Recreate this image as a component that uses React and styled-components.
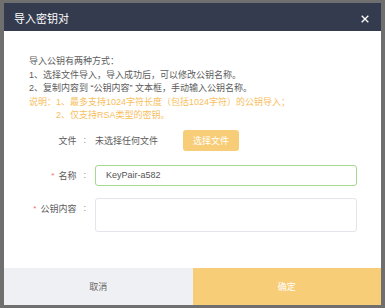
import React from 'react';
import styled, { createGlobalStyle } from 'styled-components';

const GlobalStyle = createGlobalStyle`
  html, body {
    margin: 0;
    padding: 0;
    background: #6f6f6f;
  }
  body {
    font-family: "Liberation Sans", "Noto Sans CJK SC", sans-serif;
    font-size: 9px;
    color: #666;
  }
`;

const Backdrop = styled.div`
  display: flex;
  padding: 3px 0 0 4px;
  height: 308px;
  box-sizing: border-box;
`;

const Dialog = styled.div`
  width: 377px;
  height: 302px;
  display: flex;
  flex-direction: column;
  background: #fff;
  overflow: hidden;
`;

const Header = styled.div`
  height: 28px;
  flex-shrink: 0;
  display: flex;
  align-items: center;
  justify-content: space-between;
  padding: 2px 12px 0 10px;
  box-sizing: border-box;
  background: #343b4e;
  color: #fff;
`;

const Title = styled.span`
  font-size: 11px;
`;

const CloseButton = styled.button`
  border: none;
  background: none;
  padding: 0;
  margin-top: 2px;
  display: flex;
  cursor: pointer;
`;

const Body = styled.div`
  flex: 1;
  padding: 24px 25px 0 25px;
`;

const Intro = styled.div`
  line-height: 13.5px;
  color: #5c5c5c;
  margin-bottom: 7px;
`;

const Note = styled.div`
  color: #f7be5e;
  padding-left: ${(p) => (p.indent ? '27px' : '0')};
`;

const Row = styled.div`
  display: flex;
  align-items: ${(p) => (p.top ? 'flex-start' : 'center')};
  margin-bottom: ${(p) => (p.tight ? '12px' : '14px')};
`;

const Label = styled.label`
  width: 57px;
  flex-shrink: 0;
  display: flex;
  justify-content: flex-end;
  align-items: center;
  color: #5c5c5c;
  padding-top: ${(p) => (p.top ? '4px' : '0')};
`;

const Required = styled.span`
  color: #f36b6b;
  font-size: 8px;
  margin-right: 4px;
`;

const Colon = styled.span`
  margin-left: 7px;
  color: #888;
`;

const Field = styled.div`
  margin-left: 9px;
  display: flex;
  align-items: center;
  flex: 1;
`;

const FileName = styled.span`
  color: #5c5c5c;
  margin-right: 25px;
`;

const FileButton = styled.button`
  width: 56px;
  height: 21px;
  border: none;
  border-radius: 3px;
  background: #f8cd78;
  color: #fff;
  font: inherit;
  cursor: pointer;
`;

const TextInput = styled.input`
  width: 262px;
  height: 21px;
  box-sizing: border-box;
  border: 1px solid #a6d98f;
  border-radius: 3px;
  padding: 0 10px;
  font: inherit;
  color: #555;
  outline: none;
`;

const TextArea = styled.textarea`
  width: 262px;
  height: 34px;
  box-sizing: border-box;
  border: 1px solid #e3e5ea;
  border-radius: 3px;
  resize: none;
  font: inherit;
  outline: none;
`;

const Footer = styled.div`
  height: 37px;
  flex-shrink: 0;
  display: grid;
  grid-template-columns: 1fr 1fr;
`;

const FooterButton = styled.button`
  border: none;
  font: inherit;
  cursor: pointer;
  background: ${(p) => (p.primary ? '#f8cd78' : '#eff0f4')};
  color: ${(p) => (p.primary ? '#fff' : '#666')};
`;

const CloseIcon = () => (
  <svg width="8" height="8" viewBox="0 0 8 8">
    <path d="M0.7 0.7 L7.3 7.3 M7.3 0.7 L0.7 7.3" stroke="#fff" strokeWidth="1.3" />
  </svg>
);

export default function App() {
  return (
    <>
      <GlobalStyle />
      <Backdrop>
        <Dialog>
          <Header>
            <Title>导入密钥对</Title>
            <CloseButton>
              <CloseIcon />
            </CloseButton>
          </Header>
          <Body>
            <Intro>
              <div>导入公钥有两种方式：</div>
              <div>1、选择文件导入，导入成功后，可以修改公钥名称。</div>
              <div>2、复制内容到 “公钥内容” 文本框，手动输入公钥名称。</div>
              <Note>说明：1、最多支持1024字符长度（包括1024字符）的公钥导入；</Note>
              <Note indent>2、仅支持RSA类型的密钥。</Note>
            </Intro>
            <Row>
              <Label>
                文件<Colon>:</Colon>
              </Label>
              <Field>
                <FileName>未选择任何文件</FileName>
                <FileButton>选择文件</FileButton>
              </Field>
            </Row>
            <Row tight>
              <Label>
                <Required>*</Required>名称<Colon>:</Colon>
              </Label>
              <Field>
                <TextInput defaultValue="KeyPair-a582" />
              </Field>
            </Row>
            <Row top>
              <Label top>
                <Required>*</Required>公钥内容<Colon>:</Colon>
              </Label>
              <Field>
                <TextArea />
              </Field>
            </Row>
          </Body>
          <Footer>
            <FooterButton>取消</FooterButton>
            <FooterButton primary>确定</FooterButton>
          </Footer>
        </Dialog>
      </Backdrop>
    </>
  );
}
